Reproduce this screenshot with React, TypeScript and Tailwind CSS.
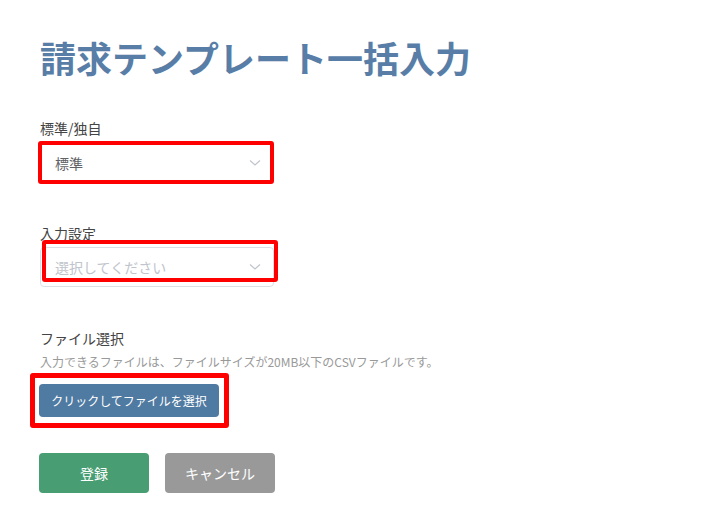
import React from 'react';

const font = { fontFamily: '"Noto Sans CJK JP", "Noto Sans", sans-serif' };

// 赤枠の注釈（スクリーンショット上のハイライト）
const Highlight: React.FC<{ className: string }> = ({ className }) => (
  <div className={`absolute border-[#ff0000] rounded-[3px] pointer-events-none ${className}`} />
);

const Chevron: React.FC = () => (
  <svg width="12" height="8" viewBox="0 0 12 8" className="shrink-0">
    <polyline points="1,1.5 6,6 11,1.5" fill="none" stroke="#c0c4cc" strokeWidth="1.2" />
  </svg>
);

const SelectBox: React.FC<{ value?: string; placeholder?: string }> = ({ value, placeholder }) => (
  <div className="w-[234px] h-[40px] border border-[#dcdfe6] rounded-[4px] bg-white flex items-center justify-between pl-[14px] pr-[12px]">
    <span className={`text-[14px] ${value ? 'text-[#606266]' : 'text-[#c0c4cc]'}`}>{value || placeholder}</span>
    <Chevron />
  </div>
);

const App: React.FC = () => {
  return (
    <div className="relative w-[704px] h-[527px] bg-white overflow-hidden" style={font}>
      <div className="flex flex-col items-start pl-[40px] pt-[30px]">
        <h1 className="text-[36px] leading-[54px] font-bold text-[#587ea7]">請求テンプレート一括入力</h1>

        <label className="mt-[34px] text-[14px] leading-[20px] text-[#444]">標準/独自</label>
        <div className="mt-[5px]">
          <SelectBox value="標準" />
        </div>

        <label className="mt-[40px] text-[14px] leading-[20px] text-[#444]">入力設定</label>
        <div className="mt-[4px]">
          <SelectBox placeholder="選択してください" />
        </div>

        <label className="mt-[41px] text-[14px] leading-[20px] text-[#444]">ファイル選択</label>
        <p className="mt-[6px] text-[12px] leading-[16px] text-[#999]">入力できるファイルは、ファイルサイズが20MB以下のCSVファイルです。</p>
        <button className="mt-[14px] ml-[-1px] w-[180px] h-[33px] rounded-[4px] bg-[#4f7aa1] text-white text-[12px] flex items-center justify-center">
          クリックしてファイルを選択
        </button>

        <div className="mt-[36px] ml-[-1px] flex gap-[16px]">
          <button className="w-[110px] h-[40px] rounded-[4px] bg-[#489d73] text-white text-[14px] flex items-center justify-center">登録</button>
          <button className="w-[110px] h-[40px] rounded-[4px] bg-[#999999] text-white text-[14px] flex items-center justify-center">キャンセル</button>
        </div>
      </div>

      <Highlight className="left-[38px] top-[141px] w-[236px] h-[43px] border-[4px]" />
      <Highlight className="left-[42px] top-[240px] w-[236px] h-[42px] border-[4px]" />
      <Highlight className="left-[30px] top-[373px] w-[199px] h-[55px] border-[5px]" />
    </div>
  );
};

export default App;
